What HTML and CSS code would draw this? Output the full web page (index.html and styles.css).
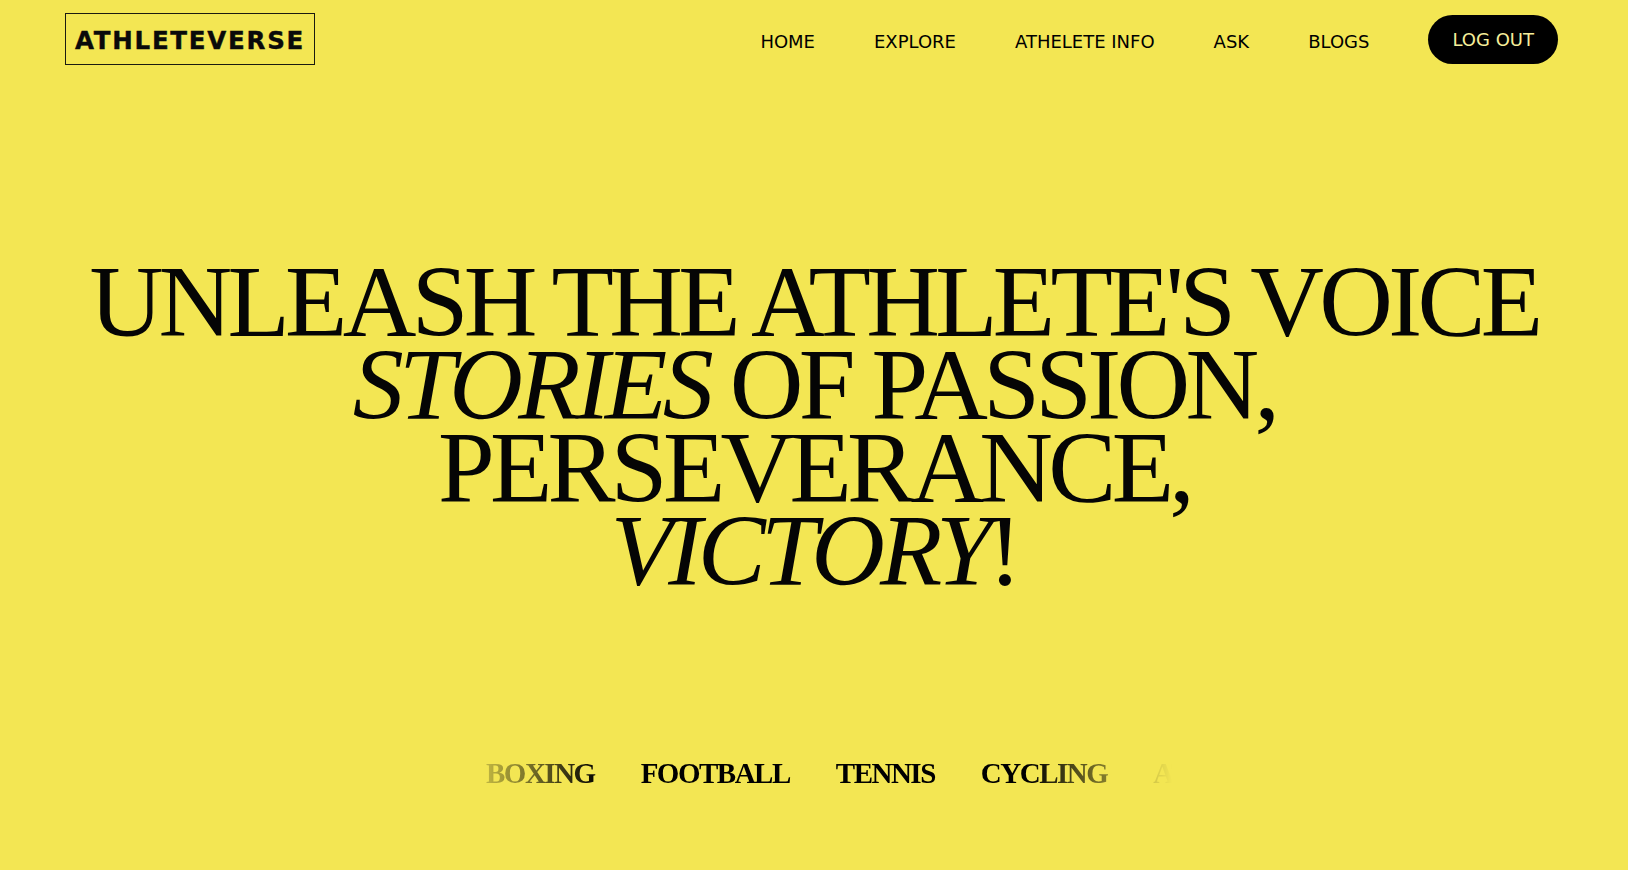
FILE: index.html
```html
<!DOCTYPE html>
<html lang="en">
<head>
<meta charset="utf-8">
<title>Athleteverse</title>
<link rel="stylesheet" href="styles.css">
</head>
<body>
<header class="topbar">
  <a class="logo" href="#">ATHLETEVERSE</a>
  <nav class="nav">
    <a class="nav-link" href="#">HOME</a>
    <a class="nav-link" href="#">EXPLORE</a>
    <a class="nav-link" href="#">ATHELETE INFO</a>
    <a class="nav-link" href="#">ASK</a>
    <a class="nav-link" href="#">BLOGS</a>
    <a class="logout" href="#">LOG OUT</a>
  </nav>
</header>
<main class="hero">
  <h1 class="headline">
    <span class="line">UNLEASH THE ATHLETE'S VOICE</span>
    <span class="line"><em>STORIES</em> OF PASSION,</span>
    <span class="line">PERSEVERANCE,</span>
    <span class="line"><em>VICTORY</em>!</span>
  </h1>
  <div class="marquee">
    <div class="track">
      <span class="sport">BOXING</span>
      <span class="sport">FOOTBALL</span>
      <span class="sport">TENNIS</span>
      <span class="sport">CYCLING</span>
      <span class="sport">ATHLETICS</span>
      <span class="sport">SWIMMING</span>
    </div>
  </div>
</main>
</body>
</html>
```

FILE: styles.css
```css
* { box-sizing: border-box; }

html, body {
  margin: 0;
  padding: 0;
}

body {
  background: #f3e653;
  color: #000;
  font-family: "DejaVu Sans", Verdana, sans-serif;
  min-height: 870px;
  overflow: hidden;
}

a { color: inherit; text-decoration: none; }

.topbar {
  display: flex;
  justify-content: space-between;
  align-items: center;
  padding: 13px 70px 0 65px;
}

.logo {
  display: flex;
  align-items: center;
  height: 52px;
  width: 250px;
  padding: 2px 0 0 9px;
  border: 1px solid #1a1a10;
  font-family: "DejaVu Sans", Verdana, sans-serif;
  font-weight: bold;
  font-size: 24.5px;
  letter-spacing: 1.75px;
  -webkit-text-stroke: 0.4px #0a0a0a;
  color: #0a0a0a;
}

.nav {
  display: flex;
  align-items: center;
}

.nav-link {
  font-size: 18px;
  margin-right: 59px;
  margin-top: 5px;
}

.nav-link:last-of-type { margin-right: 55px; }

.logout {
  display: flex;
  align-items: center;
  height: 49px;
  padding: 0 24px;
  border-radius: 25px;
  background: #000;
  color: #f6ee9a;
  font-size: 18px;
}

.hero {
  display: flex;
  flex-direction: column;
  align-items: center;
}

.headline {
  margin: 195px 0 0;
  font-family: "Liberation Serif", "Times New Roman", serif;
  font-weight: normal;
  font-size: 102px;
  line-height: 83px;
  letter-spacing: -4.7px;
  text-align: center;
  color: #050505;
}

.line { display: block; }

.headline em { font-style: italic; }

.marquee {
  margin-top: 161px;
  width: 716px;
  overflow: hidden;
  -webkit-mask-image: linear-gradient(to right, transparent 0, #000 20%, #000 80%, transparent 100%);
  mask-image: linear-gradient(to right, transparent 0, #000 20%, #000 80%, transparent 100%);
}

.track {
  display: flex;
  gap: 46px;
  padding-left: 30px;
  white-space: nowrap;
}

.sport {
  font-family: "Liberation Serif", "Times New Roman", serif;
  font-weight: bold;
  font-size: 29px;
  line-height: 40px;
  letter-spacing: -1.5px;
  color: #000;
}
```
